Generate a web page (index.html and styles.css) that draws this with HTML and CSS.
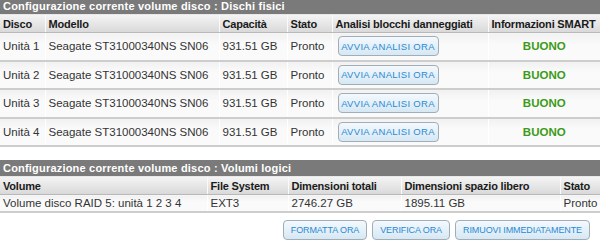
FILE: index.html
```html
<!DOCTYPE html>
<html>
<head>
<meta charset="utf-8">
<link rel="stylesheet" href="styles.css">
</head>
<body>
<section class="panel">
  <div class="title">Configurazione corrente volume disco : Dischi fisici</div>
  <table class="grid disks">
    <colgroup>
      <col class="c1"><col class="c2"><col class="c3"><col class="c4"><col class="c5"><col class="c6">
    </colgroup>
    <thead>
      <tr><th>Disco</th><th>Modello</th><th>Capacità</th><th>Stato</th><th>Analisi blocchi danneggiati</th><th>Informazioni SMART</th></tr>
    </thead>
    <tbody>
      <tr><td>Unità 1</td><td>Seagate ST31000340NS SN06</td><td>931.51 GB</td><td>Pronto</td><td><button class="btn">AVVIA ANALISI ORA</button></td><td class="ok">BUONO</td></tr>
      <tr><td>Unità 2</td><td>Seagate ST31000340NS SN06</td><td>931.51 GB</td><td>Pronto</td><td><button class="btn">AVVIA ANALISI ORA</button></td><td class="ok">BUONO</td></tr>
      <tr><td>Unità 3</td><td>Seagate ST31000340NS SN06</td><td>931.51 GB</td><td>Pronto</td><td><button class="btn">AVVIA ANALISI ORA</button></td><td class="ok">BUONO</td></tr>
      <tr><td>Unità 4</td><td>Seagate ST31000340NS SN06</td><td>931.51 GB</td><td>Pronto</td><td><button class="btn">AVVIA ANALISI ORA</button></td><td class="ok">BUONO</td></tr>
    </tbody>
  </table>
</section>
<section class="panel second">
  <div class="title">Configurazione corrente volume disco : Volumi logici</div>
  <table class="grid volumes">
    <colgroup>
      <col class="v1"><col class="v2"><col class="v3"><col class="v4"><col class="v5">
    </colgroup>
    <thead>
      <tr><th>Volume</th><th>File System</th><th>Dimensioni totali</th><th>Dimensioni spazio libero</th><th>Stato</th></tr>
    </thead>
    <tbody>
      <tr><td>Volume disco RAID 5: unità 1 2 3 4</td><td>EXT3</td><td>2746.27 GB</td><td>1895.11 GB</td><td>Pronto</td></tr>
    </tbody>
  </table>
  <div class="actions">
    <button class="btn">FORMATTA ORA</button>
    <button class="btn">VERIFICA ORA</button>
    <button class="btn">RIMUOVI IMMEDIATAMENTE</button>
  </div>
</section>
</body>
</html>
```
FILE: styles.css
```css
html, body { margin: 0; padding: 0; background: #fff; }
body {
  width: 600px;
  font-family: "Liberation Sans", Arial, sans-serif;
  font-size: 11.5px;
  color: #222;
}
.title {
  height: 14px;
  line-height: 13px;
  padding-left: 3px;
  background: #7a7a7a;
  color: #fff;
  font-size: 11px;
  letter-spacing: 0.2px;
  font-weight: bold;
  border-bottom: 1px solid #e8e8e8;
}
.second { margin-top: 13px; }
.second .title { height: 16px; line-height: 16px; }
.grid {
  width: 600px;
  border-collapse: collapse;
  table-layout: fixed;
}
.grid th {
  height: 17px;
  padding: 0 0 0 3px;
  text-align: left;
  font-size: 11px;
  letter-spacing: -0.2px;
  font-weight: bold;
  color: #1a1a1a;
  background: linear-gradient(#f4f4f4, #d9d9d9);
  border-left: 1px solid #fafafa;
  border-bottom: 1px solid #b8b8b8;
  white-space: nowrap;
  overflow: hidden;
}
.grid td {
  padding: 0 0 0 3px;
  color: #333;
  background: linear-gradient(#f1f1f1, #fafafa 40%, #fafafa);
  border-left: 1px solid #fff;
  border-bottom: 2px solid #cdcdcd;
  white-space: nowrap;
  overflow: hidden;
}
.grid th:first-child, .grid td:first-child { border-left: none; }
.disks td { height: 26.5px; }
.volumes td { height: 16px; }
.c1 { width: 45px; }
.c2 { width: 174px; }
.c3 { width: 68px; }
.c4 { width: 45px; }
.c5 { width: 156px; }
.c6 { width: 112px; }
.v1 { width: 207px; }
.v2 { width: 81px; }
.v3 { width: 113px; }
.v4 { width: 159px; }
.v5 { width: 40px; }
.grid td.ok {
  text-align: center;
  padding: 0;
  color: #3c9a16;
  font-weight: bold;
}
.btn {
  height: 20px;
  margin: 0;
  padding: 0 7px;
  font-family: "Liberation Sans", Arial, sans-serif;
  font-size: 9px;
  color: #2a8ad4;
  letter-spacing: -0.1px;
  background: linear-gradient(#f4f9fd, #d6e8f4);
  border: 1px solid #a2adb6;
  border-radius: 4px;
}
.disks .btn {
  margin-left: 2px;
  width: 101px;
  padding: 0;
  font-size: 9.5px;
  letter-spacing: 0.3px;
}
.actions {
  display: flex;
  justify-content: flex-end;
  gap: 5px;
  padding: 7px 10px 0 0;
}
```
